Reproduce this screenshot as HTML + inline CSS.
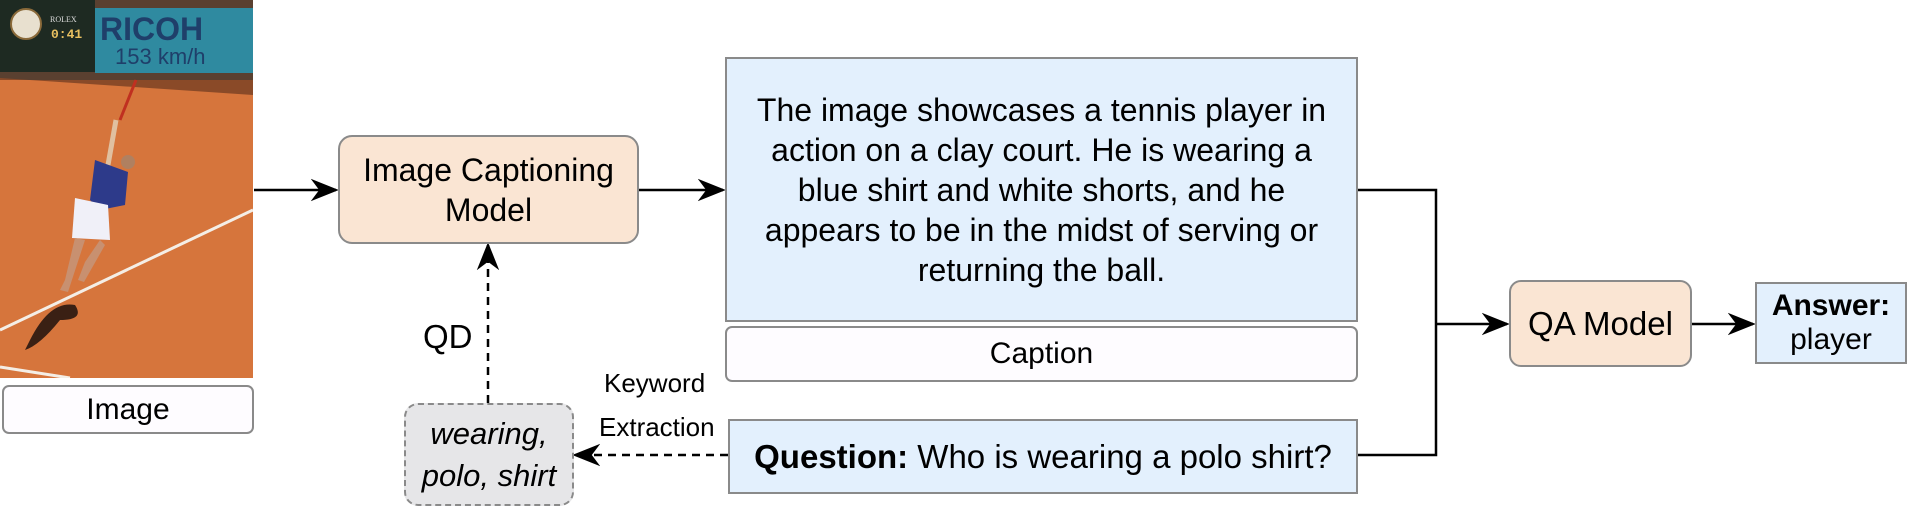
<!DOCTYPE html>
<html><head><meta charset="utf-8"><style>
html,body{margin:0;padding:0;background:#fff;}
body{width:1908px;height:510px;position:relative;overflow:hidden;font-family:"Liberation Sans",Arial,sans-serif;color:#000;}
.b{position:absolute;box-sizing:border-box;display:flex;align-items:center;justify-content:center;text-align:center;}
.t{position:absolute;white-space:nowrap;}
</style></head><body>
<svg style="position:absolute;left:0;top:0" width="253" height="378" viewBox="0 0 253 378">
<rect width="253" height="378" fill="#d6753c"/>
<rect x="0" y="0" width="253" height="80" fill="#5a4030"/>
<rect x="95" y="8" width="158" height="65" fill="#2f8aa0"/>
<text x="100" y="40" font-family="Liberation Sans" font-weight="bold" font-size="32" fill="#1f3f6a">RICOH</text>
<text x="115" y="64" font-family="Liberation Sans" font-size="22" fill="#1f3f6a">153 km/h</text>
<rect x="0" y="0" width="95" height="72" fill="#1e2a22"/>
<circle cx="26" cy="24" r="15" fill="#e8e0cf" stroke="#8a6a3a" stroke-width="2"/>
<text x="50" y="22" font-size="8" fill="#ddd" font-family="Liberation Serif">ROLEX</text>
<text x="51" y="38" font-size="13" fill="#e8c060" font-family="Liberation Mono" font-weight="bold">0:41</text>
<path d="M0 80 L253 80 L253 95 L0 78Z" fill="#8a4a28"/>
<line x1="0" y1="330" x2="253" y2="210" stroke="#f4eee6" stroke-width="3"/>
<line x1="0" y1="367" x2="70" y2="378" stroke="#f4eee6" stroke-width="3"/>
<path d="M30 340 Q50 300 75 305 Q85 320 60 320 Q40 345 25 350Z" fill="#3a2014"/>
<line x1="136" y1="80" x2="120" y2="120" stroke="#c03020" stroke-width="3"/>
<line x1="116" y1="120" x2="108" y2="165" stroke="#e0c0a0" stroke-width="5"/>
<path d="M95 160 L128 172 L125 205 L100 210 L90 200Z" fill="#2d3a8a"/>
<path d="M75 198 L108 205 L110 240 L72 238Z" fill="#f0f0f8"/>
<path d="M75 238 L65 280 L60 290 L68 292 L85 240Z" fill="#c89070"/>
<path d="M100 240 L85 262 L78 280 L84 282 L105 245Z" fill="#c89070"/>
<circle cx="128" cy="162" r="7" fill="#b08060"/>
</svg>
<div class="b" style="left:2px;top:385px;width:252px;height:49px;border:2.5px solid #8a8a8a;border-radius:7px;background:#fefcff;font-size:30px;">Image</div>

<svg style="position:absolute;left:0;top:0" width="1908" height="510">
<defs>
<marker id="m" viewBox="0 0 10 10" markerWidth="28" markerHeight="28" refX="9" refY="5" orient="auto" markerUnits="userSpaceOnUse"><path d="M0 1 L10 5 L0 9 L3 5Z" fill="#000"/></marker></defs>
<g stroke="#000" stroke-width="2.5" fill="none">
<line x1="254" y1="190" x2="336" y2="190" marker-end="url(#m)"/>
<line x1="638" y1="190" x2="723" y2="190" marker-end="url(#m)"/>
<polyline points="1357,190 1436,190 1436,455 1357,455"/>
<line x1="1436" y1="324" x2="1507" y2="324" marker-end="url(#m)"/>
<line x1="1692" y1="324" x2="1753" y2="324" marker-end="url(#m)"/>
<line x1="728" y1="455" x2="575" y2="455" stroke-dasharray="8,6" marker-end="url(#m)"/>
<line x1="488" y1="403" x2="488" y2="245" stroke-dasharray="8,6" marker-end="url(#m)"/>
</g>
</svg>

<div class="b" style="left:338px;top:135px;width:301px;height:109px;border:2.5px solid #8a8a8a;border-radius:14px;background:#fae5d3;font-size:32px;line-height:40px;">Image Captioning<br>Model</div>
<div class="b" style="left:725px;top:57px;width:633px;height:265px;border:2.5px solid #8a8a8a;background:#e3f0fd;font-size:32px;line-height:40px;padding:0 18px;">The image showcases a tennis player in action on a clay court. He is wearing a blue shirt and white shorts, and he appears to be in the midst of serving or returning the ball.</div>
<div class="b" style="left:725px;top:326px;width:633px;height:56px;border:2.5px solid #8a8a8a;border-radius:7px;background:#fefcff;font-size:30px;">Caption</div>
<div class="b" style="left:728px;top:419px;width:630px;height:75px;border:2.5px solid #8a8a8a;background:#e3f0fd;font-size:33px;"><b>Question:</b>&nbsp;Who is wearing a polo shirt?</div>
<div class="b" style="left:1509px;top:280px;width:183px;height:87px;border:2.5px solid #8a8a8a;border-radius:12px;background:#fae5d3;font-size:33px;">QA Model</div>
<div class="b" style="left:1755px;top:282px;width:152px;height:82px;border:2.5px solid #8a8a8a;background:#e3f0fd;font-size:30px;line-height:34px;"><div><b>Answer:</b><br>player</div></div>
<div class="b" style="left:404px;top:403px;width:170px;height:103px;border:2.5px dashed #8a8a8a;border-radius:14px;background:#e6e6e8;font-size:31px;line-height:42px;font-style:italic;">wearing,<br>polo, shirt</div>
<div class="t" style="left:423px;top:318px;font-size:33px;">QD</div>
<div class="t" style="left:604px;top:368px;font-size:26px;">Keyword</div>
<div class="t" style="left:599px;top:412px;font-size:26px;">Extraction</div>
</body></html>
